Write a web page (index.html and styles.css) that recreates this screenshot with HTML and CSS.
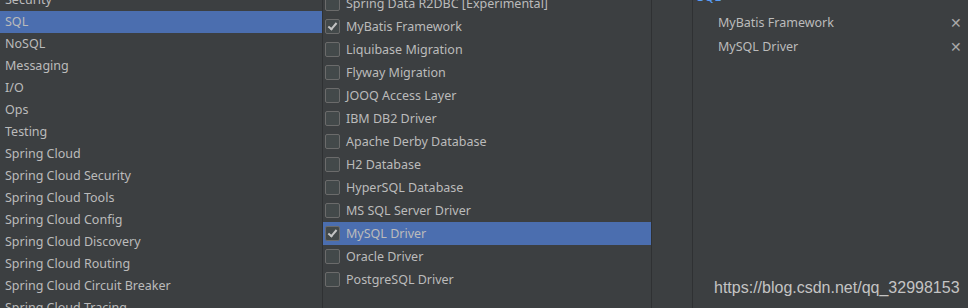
FILE: index.html
```html
<!DOCTYPE html>
<html lang="en">
<head>
    <meta charset="UTF-8">
    <title>New Project - Dependencies</title>
    <link rel="stylesheet" href="styles.css">
</head>
<body>
    <div class="wizard">
        <ul class="categories" role="list">
            <li>Security</li>
            <li class="selected">SQL</li>
            <li>NoSQL</li>
            <li>Messaging</li>
            <li>I/O</li>
            <li>Ops</li>
            <li>Testing</li>
            <li>Spring Cloud</li>
            <li>Spring Cloud Security</li>
            <li>Spring Cloud Tools</li>
            <li>Spring Cloud Config</li>
            <li>Spring Cloud Discovery</li>
            <li>Spring Cloud Routing</li>
            <li>Spring Cloud Circuit Breaker</li>
            <li>Spring Cloud Tracing</li>
        </ul>
        <ul class="deps" role="list">
            <li><span class="box"></span>Spring Data R2DBC [Experimental]</li>
            <li><span class="box checked"></span>MyBatis Framework</li>
            <li><span class="box"></span>Liquibase Migration</li>
            <li><span class="box"></span>Flyway Migration</li>
            <li><span class="box"></span>JOOQ Access Layer</li>
            <li><span class="box"></span>IBM DB2 Driver</li>
            <li><span class="box"></span>Apache Derby Database</li>
            <li><span class="box"></span>H2 Database</li>
            <li><span class="box"></span>HyperSQL Database</li>
            <li><span class="box"></span>MS SQL Server Driver</li>
            <li class="selected"><span class="box checked"></span>MySQL Driver</li>
            <li><span class="box"></span>Oracle Driver</li>
            <li><span class="box"></span>PostgreSQL Driver</li>
        </ul>
        <div class="spacer"></div>
        <div class="chosen">
            <h2>SQL</h2>
            <ul role="list">
                <li>MyBatis Framework <span class="remove">&#x2715;</span></li>
                <li>MySQL Driver <span class="remove">&#x2715;</span></li>
            </ul>
        </div>
        <span class="watermark">https://blog.csdn.net/qq_32998153</span>
    </div>
</body>
</html>
```

FILE: styles.css
```css
body {
    margin: 0;
    background-color: #3c3f41;
    color: #bbbbbb;
    font-family: "Noto Sans", "Open Sans", sans-serif;
    font-size: 12.5px;
    overflow: hidden;
}
[role="list"] {
    list-style-type: none;
    margin: 0;
    padding: 0;
}
.wizard {
    position: relative;
    display: grid;
    grid-template-columns: 323px 329px 41px 1fr;
    height: 308px;
    overflow: hidden;
}
.categories {
    border-right: 1px solid #2f3133;
    margin-top: -11px;
    li {
        height: 22px;
        line-height: 22px;
        padding-left: 5px;
        white-space: nowrap;
    }
}
.selected {
    background-color: #4b6eaf;
}
.deps {
    border-right: 1px solid #2f3133;
    margin-top: -8px;
    li {
        display: flex;
        align-items: center;
        gap: 6px;
        height: 23px;
        padding-left: 2px;
        white-space: nowrap;
    }
}
.box {
    width: 13px;
    height: 13px;
    border: 1px solid #6b6b6b;
    border-radius: 2px;
    background-color: #43494a;
    position: relative;
    flex: none;
    &.checked::after {
        content: "";
        position: absolute;
        left: 4px;
        top: 1px;
        width: 3px;
        height: 7px;
        border: solid #c4c4c4;
        border-width: 0 2px 2px 0;
        transform: rotate(40deg);
    }
}
.spacer {
    border-right: 1px solid #2f3133;
}
.chosen {
    margin-top: -14px;
    h2 {
        margin: 0 0 4px 4px;
        font-size: 13px;
        font-weight: normal;
        color: #589df6;
        line-height: 20px;
    }
    li {
        display: flex;
        justify-content: space-between;
        align-items: center;
        height: 24px;
        padding: 0 6px 0 25px;
    }
}
.remove {
    color: #a9a9a9;
    font-size: 14px;
}
.watermark {
    position: absolute;
    left: 714px;
    top: 279px;
    font-family: "Liberation Sans", Arial, sans-serif;
    font-size: 16px;
    color: #c4c4c4;
}
```
